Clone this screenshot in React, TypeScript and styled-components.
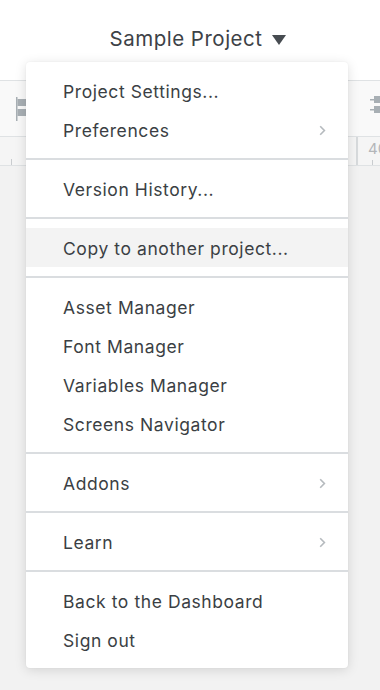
import React from "react";
import styled, { createGlobalStyle } from "styled-components";

const GlobalStyle = createGlobalStyle`
  html, body { margin: 0; padding: 0; }
  body {
    font-family: Inter, "Noto Sans", "Liberation Sans", sans-serif;
    -webkit-font-smoothing: antialiased;
  }
  * { box-sizing: border-box; }
`;

const Page = styled.div`
  position: relative;
  width: 380px;
  height: 690px;
  overflow: hidden;
  display: flex;
  flex-direction: column;
  background: #f2f2f2;
`;

const Header = styled.header`
  height: 80px;
  background: #ffffff;
  display: flex;
  align-items: flex-start;
  justify-content: center;
  padding-top: 26px;
  padding-left: 16px;
  gap: 10px;
`;

const Title = styled.span`
  font-size: 20.5px;
  color: #3d4247;
  letter-spacing: 0.5px;
  line-height: 26px;
`;

const Caret = styled.span`
  width: 0;
  height: 0;
  margin-top: 9px;
  border-left: 7px solid transparent;
  border-right: 7px solid transparent;
  border-top: 10px solid #474c51;
`;

const Toolbar = styled.div`
  height: 57px;
  border-top: 1px solid #dfe2e4;
  border-bottom: 1px solid #dfe2e4;
  background: #f9f9f9;
  display: flex;
  align-items: center;
  justify-content: space-between;
  padding: 0 0 0 16px;
`;

const ToolIcon = styled.svg`
  display: block;
  color: #a8afb4;
`;

const Ruler = styled.div`
  height: 29px;
  background: #f5f5f5;
  border-bottom: 1px solid #dfe2e4;
  display: flex;
  justify-content: flex-end;
`;

const RulerCell = styled.div`
  position: relative;
  width: 24px;
  border-left: 2px solid #d7dadc;
  padding: 2px 0 0 10px;
  font-size: 15px;
  color: #b3b6b9;
  white-space: nowrap;
`;

const Tick = styled.span`
  position: absolute;
  left: 14px;
  bottom: 0;
  width: 1px;
  height: 5px;
  background: #c9cccf;
`;

const LeftTick = styled.span`
  position: absolute;
  left: 11px;
  top: 159px;
  width: 1px;
  height: 6px;
  background: #c9cccf;
`;

const Canvas = styled.div`
  flex: 1;
  background: #f2f2f2;
`;

const Menu = styled.nav`
  position: absolute;
  top: 62px;
  left: 26px;
  width: 322px;
  background: #ffffff;
  border-radius: 4px;
  box-shadow: 0 2px 12px rgba(0, 0, 0, 0.13), 0 0 2px rgba(0, 0, 0, 0.05);
  display: flex;
  flex-direction: column;
`;

const Group = styled.div`
  padding: 9px 0;
  display: flex;
  flex-direction: column;
`;

const Separator = styled.div`
  height: 2px;
  background: #dadde0;
`;

const Item = styled.div<{ $active?: boolean }>`
  height: 39px;
  display: flex;
  align-items: center;
  justify-content: space-between;
  padding: 1px 22px 0 37px;
  font-size: 17.5px;
  letter-spacing: 0.58px;
  color: #3b3f44;
  background: ${(p) => (p.$active ? "#f3f3f3" : "transparent")};
`;

const Chevron = () => (
  <svg width="7" height="11" viewBox="0 0 7 11" fill="none">
    <path d="M1.2 1.2 L5.4 5.5 L1.2 9.8" stroke="#b5babe" strokeWidth="1.6" />
  </svg>
);

type Entry = { label: string; sub?: boolean; active?: boolean };

const groups: Entry[][] = [
  [{ label: "Project Settings..." }, { label: "Preferences", sub: true }],
  [{ label: "Version History..." }],
  [{ label: "Copy to another project...", active: true }],
  [
    { label: "Asset Manager" },
    { label: "Font Manager" },
    { label: "Variables Manager" },
    { label: "Screens Navigator" },
  ],
  [{ label: "Addons", sub: true }],
  [{ label: "Learn", sub: true }],
  [{ label: "Back to the Dashboard" }, { label: "Sign out" }],
];

export default function App() {
  return (
    <>
      <GlobalStyle />
      <Page>
        <Header>
          <Title>Sample Project</Title>
          <Caret />
        </Header>
        <Toolbar>
          <ToolIcon width="10" height="24" viewBox="0 0 10 24">
            <rect x="0" y="0" width="1.5" height="24" fill="currentColor" />
            <rect x="1.5" y="2" width="9" height="7" fill="currentColor" />
            <rect x="1.5" y="12" width="9" height="7" fill="currentColor" />
          </ToolIcon>
          <ToolIcon width="10" height="18" viewBox="0 0 10 18" style={{ marginBottom: 8 }}>
            <rect x="0" y="3" width="4" height="1.5" fill="currentColor" />
            <rect x="4" y="0" width="8" height="7" fill="currentColor" />
            <rect x="0" y="13" width="4" height="1.5" fill="currentColor" />
            <rect x="4" y="10" width="8" height="7" fill="currentColor" />
          </ToolIcon>
        </Toolbar>
        <Ruler>
          <RulerCell>
            40
            <Tick />
          </RulerCell>
        </Ruler>
        <LeftTick />
        <Canvas />
        <Menu>
          {groups.map((g, gi) => (
            <React.Fragment key={gi}>
              {gi > 0 && <Separator />}
              <Group>
                {g.map((e) => (
                  <Item key={e.label} $active={e.active}>
                    <span>{e.label}</span>
                    {e.sub && <Chevron />}
                  </Item>
                ))}
              </Group>
            </React.Fragment>
          ))}
        </Menu>
      </Page>
    </>
  );
}
